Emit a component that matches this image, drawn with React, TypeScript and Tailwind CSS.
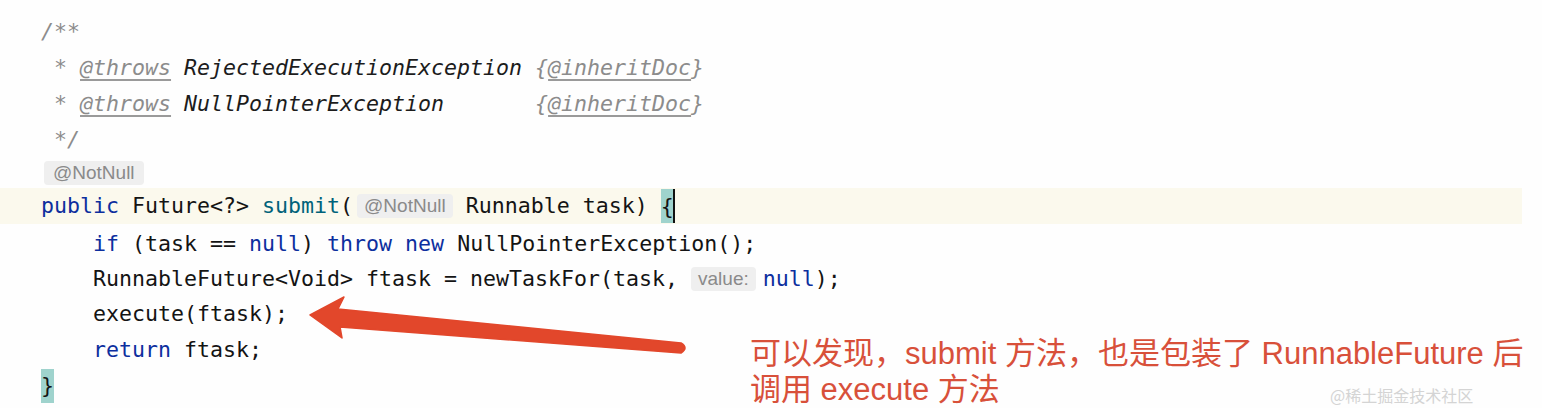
import React from 'react'

const mono = { fontFamily: '"DejaVu Sans Mono", "Liberation Mono", monospace' }

function Hint({ children, className = '' }: { children: React.ReactNode; className?: string }) {
  return (
    <span
      className={`inline-flex items-center h-[24px] px-[7px] rounded-[4px] bg-[#efefef] text-[#8a8a8a] text-[19px] not-italic align-middle ${className}`}
      style={{ fontFamily: '"Liberation Sans", Arial, sans-serif' }}
    >
      {children}
    </span>
  )
}

const Kw = ({ children }: { children: React.ReactNode }) => <span className="text-[#0d2f9e]">{children}</span>

export default function App() {
  return (
    <div className="relative w-[1542px] h-[408px] overflow-hidden bg-[#fefefe] text-[#141414]">
      <div className="flex flex-col pt-[14px] text-[21.6px] leading-[36px] whitespace-pre" style={mono}>
        <div className="h-[36px] pl-[41px] italic text-[#8c8c8c]">/**</div>
        <div className="h-[36px] pl-[41px] italic text-[#8c8c8c]">
          {' * '}
          <span className="underline decoration-[#9a9a9a] underline-offset-4">@throws</span>{' '}
          <span className="text-[#1c1c1c]">RejectedExecutionException</span>
          {' {'}
          <span className="underline decoration-[#9a9a9a] underline-offset-4">@inheritDoc</span>
          {'}'}
        </div>
        <div className="h-[36px] pl-[41px] italic text-[#8c8c8c]">
          {' * '}
          <span className="underline decoration-[#9a9a9a] underline-offset-4">@throws</span>{' '}
          <span className="text-[#1c1c1c]">NullPointerException</span>
          {'       {'}
          <span className="underline decoration-[#9a9a9a] underline-offset-4">@inheritDoc</span>
          {'}'}
        </div>
        <div className="h-[36px] pl-[41px] italic text-[#8c8c8c]">{' */'}</div>
        <div className="h-[30px] pl-[44px] flex items-center">
          <Hint className="px-[9px]">@NotNull</Hint>
        </div>
        <div className="h-[36px] mr-[20px] bg-[#fbf9ed] pl-[41px] flex items-center">
          <Kw>public</Kw>
          {' Future<?> '}
          <span className="text-[#00627a]">submit</span>
          {'('}
          <Hint className="ml-[4px]">@NotNull</Hint>
          {' Runnable task) '}
          <span className="relative inline-block h-[34px] bg-[#9fd3cd]">
            {'{'}
            <span className="absolute right-[-1px] top-0 w-[2px] h-[34px] bg-[#111]" />
          </span>
        </div>
        <div className="h-[36px] pl-[41px] pt-[2px]">
          {'    '}
          <Kw>if</Kw>
          {' (task == '}
          <Kw>null</Kw>
          {') '}
          <Kw>throw</Kw> <Kw>new</Kw>
          {' NullPointerException();'}
        </div>
        <div className="h-[36px] pl-[41px] flex items-center pt-[2px]">
          {'    RunnableFuture<Void> ftask = newTaskFor(task, '}
          <Hint className="mr-[7px]">value:</Hint>
          <Kw>null</Kw>
          {');'}
        </div>
        <div className="h-[36px] pl-[41px]">{'    execute(ftask);'}</div>
        <div className="h-[36px] pl-[41px]">
          {'    '}
          <Kw>return</Kw>
          {' ftask;'}
        </div>
        <div className="h-[36px] pl-[41px] flex items-center">
          <span className="inline-block h-[34px] leading-[34px] bg-[#9fd3cd]">{'}'}</span>
        </div>
      </div>

      <svg className="absolute left-0 top-0 pointer-events-none" width="1542" height="408">
        <path
          d="M310 315 L344 297 L338 309 L681 343 Q689 348 681 353 L340 327 L342 338 Z"
          fill="#e2472b"
          stroke="#e2472b"
          strokeWidth="1.5"
          strokeLinejoin="round"
        />
      </svg>

      <div
        className="absolute left-[750px] top-[336px] text-[31px] leading-[36px] text-[#d8503a] whitespace-nowrap"
        style={{ fontFamily: '"Liberation Sans", "Noto Sans CJK SC", sans-serif' }}
      >
        <div>可以发现，submit 方法，也是包装了 RunnableFuture 后</div>
        <div>调用 execute 方法</div>
      </div>

      <div
        className="absolute left-[1330px] top-[386px] text-[16px] leading-[18px] text-[#d4d4d4] whitespace-nowrap"
        style={{ fontFamily: '"Noto Sans CJK SC", sans-serif' }}
      >
        @稀土掘金技术社区
      </div>
    </div>
  )
}
